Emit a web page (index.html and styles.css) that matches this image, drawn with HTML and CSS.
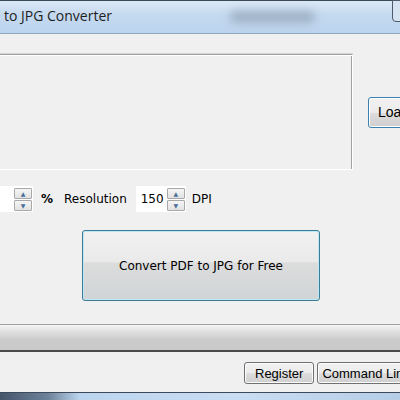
FILE: index.html
```html
<!DOCTYPE html>
<html lang="en">
  <head>
    <meta charset="UTF-8" />
    <title>PDF to JPG Converter</title>
    <link rel="stylesheet" href="styles.css">
  </head>
  <body>
    <div class="window">
      <div class="titlebar">
        <span class="title">to JPG Converter</span>
        <span class="blur"></span>
        <span class="close"></span>
      </div>

      <div class="content">
        <div class="top-row">
          <div class="filebox"></div>
          <button class="btn load">Load</button>
        </div>

        <div class="options">
          <div class="spin">
            <div class="spin-input"></div>
            <div class="spin-arrows">
              <span class="arrow up">&#9650;</span>
              <span class="arrow down">&#9660;</span>
            </div>
          </div>
          <span class="label pct">%</span>
          <span class="label res">Resolution</span>
          <div class="spin">
            <div class="spin-input wide">150</div>
            <div class="spin-arrows">
              <span class="arrow up">&#9650;</span>
              <span class="arrow down">&#9660;</span>
            </div>
          </div>
          <span class="label dpi">DPI</span>
        </div>

        <div class="convert-row">
          <button class="convert">Convert PDF to JPG for Free</button>
        </div>

        <div class="progress"></div>

        <div class="bottom-row">
          <button class="btn">Register</button>
          <button class="btn cmd">Command Line</button>
        </div>
      </div>

      <div class="taskbar"></div>
    </div>
  </body>
</html>
```

FILE: styles.css
```css
* {
  box-sizing: border-box;
  margin: 0;
  padding: 0;
}

body {
  width: 400px;
  height: 400px;
  overflow: hidden;
  background: #f0f0f0;
  font-family: 'DejaVu Sans', Tahoma, sans-serif;
  font-size: 12px;
  color: #000;
}

.window {
  display: flex;
  flex-direction: column;
  height: 400px;
  overflow: hidden;
}

.titlebar {
  height: 34px;
  display: flex;
  align-items: center;
  flex-shrink: 0;
  border-top: 1px solid #3a4a5a;
  border-bottom: 1px solid #8ea8c2;
  background: linear-gradient(180deg, #dbe8f6 0%, #c4d9ef 45%, #bcd4ee 100%);
  position: relative;
}

.title {
  padding-left: 4px;
  margin-top: -3px;
  font-family: 'Open Sans', sans-serif;
  font-size: 14px;
  color: #1e1e1e;
}

.blur {
  margin-left: 118px;
  width: 85px;
  height: 12px;
  border-radius: 6px;
  background: #9fb2c6;
  filter: blur(4px);
}

.close {
  position: absolute;
  right: -10px;
  top: -1px;
  width: 18px;
  height: 22px;
  border: 1px solid #4b5a6c;
  border-radius: 0 0 0 4px;
  background: #d6e3f1;
}

.content {
  flex: 1;
  display: flex;
  flex-direction: column;
}

.top-row {
  display: flex;
  align-items: center;
  margin-top: 20px;
}

.filebox {
  flex-shrink: 0;
  width: 353px;
  height: 116px;
  border-top: 1px solid #a0a0a0;
  border-right: 1px solid #fff;
  border-bottom: 1px solid #fff;
  box-shadow: inset 0 1px 0 #fff, inset -1px 0 0 #a0a0a0, 0 -1px 0 #d5d5d5;
}

.btn {
  flex-shrink: 0;
  font-family: 'Liberation Sans', Arial, sans-serif;
  font-size: 13px;
  color: #000;
  border: 1px solid #707070;
  border-radius: 3px;
  background: linear-gradient(180deg, #f2f2f2 0%, #ebebeb 50%, #dddddd 51%, #cfcfcf 100%);
  box-shadow: inset 0 0 0 1px #fcfcfc;
  height: 22px;
  padding: 0 10px;
  white-space: nowrap;
}

.btn.cmd {
  padding: 0 4px;
}

.load {
  margin-left: 15px;
  height: 31px;
  padding: 0 9px;
  font-size: 14px;
  border-color: #3c7fb1;
  box-shadow: inset 0 0 0 1px #fff;
}

.options {
  display: flex;
  align-items: center;
  margin-top: 16px;
  height: 26px;
}

.spin {
  display: flex;
  align-items: center;
  height: 26px;
  background: #fff;
}

.spin-input {
  width: 14px;
  height: 24px;
}

.spin-input.wide {
  width: 31px;
  padding-left: 5px;
  line-height: 24px;
  font-size: 12px;
}

.spin-arrows {
  display: flex;
  flex-direction: column;
  gap: 1px;
  margin-right: 1px;
}

.arrow {
  width: 18px;
  height: 11px;
  border: 1px solid #a9a9a9;
  border-radius: 1px;
  background: linear-gradient(180deg, #f5f5f5, #e2e2e2);
  color: #4a6f9a;
  font-size: 6px;
  line-height: 9px;
  text-align: center;
}

.label {
  font-size: 12px;
}

.pct {
  margin-left: 8px;
  font-weight: bold;
}

.res {
  margin-left: 11px;
  margin-right: 9px;
}

.dpi {
  margin-left: 6px;
}

.convert-row {
  display: flex;
  margin-top: 18px;
}

.convert {
  margin-left: 82px;
  width: 238px;
  height: 71px;
  border: 1px solid #3a7c95;
  border-radius: 3px;
  background: linear-gradient(180deg, #f1f1f1 0%, #eaeaea 45%, #dcdcdc 46%, #d0d4d6 100%);
  box-shadow: inset 0 0 0 1px #bfe7f5;
  font-family: 'DejaVu Sans', Tahoma, sans-serif;
  font-size: 12px;
  color: #000;
}

.progress {
  margin-top: 23px;
  height: 28px;
  border-top: 1px solid #a0a0a0;
  border-bottom: 2px solid #4a4a4a;
  background: linear-gradient(180deg, #f6f6f6 0%, #e0e0e0 25%, #cbcbcb 60%, #c9c9c9 100%);
}

.bottom-row {
  display: flex;
  gap: 3px;
  margin-top: 10px;
  padding-left: 244px;
}

.taskbar {
  height: 8px;
  flex-shrink: 0;
  border-top: 1px solid #3a4a5a;
  background: linear-gradient(90deg, #44556a 0%, #6d839a 12%, #bcd5ee 20%, #c9ddf2 60%, #b5cde6 100%);
}
```
